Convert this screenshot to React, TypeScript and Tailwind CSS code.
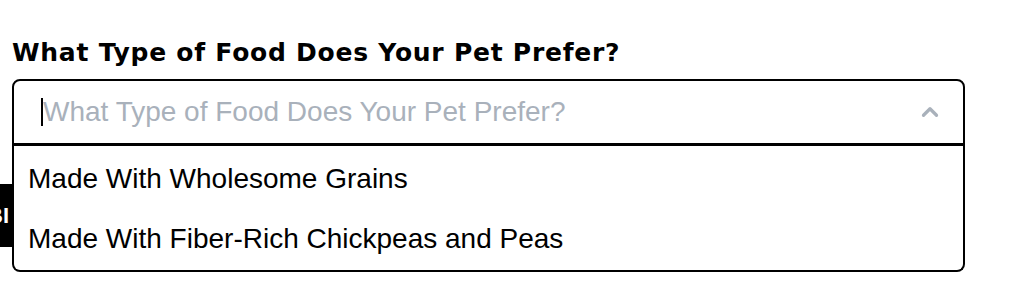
import { ChevronUp } from "lucide-react";

const options = [
  "Made With Wholesome Grains",
  "Made With Fiber-Rich Chickpeas and Peas",
];

const App = () => {
  return (
    <div className="relative w-[1024px] h-[307px] bg-white overflow-hidden">
      {/* partly hidden element behind the list */}
      <div className="absolute left-0 top-[184px] w-[12px] h-[63px] bg-black overflow-hidden flex items-center justify-end pr-[3px]">
        <span className="text-white text-[22px] font-bold whitespace-nowrap font-['Liberation_Sans',Arial,sans-serif] leading-none">
          BI
        </span>
      </div>

      <div className="pt-[38px] px-[12px]">
        <h2 className="text-[25px] font-bold text-black leading-[30px] mb-[11px] font-['DejaVu_Sans',sans-serif] tracking-[0.75px]">
          What Type of Food Does Your Pet Prefer?
        </h2>

        <div className="relative z-10 w-[953px]">
          {/* input */}
          <div className="flex items-center h-[67px] border-2 border-b-[3px] border-black rounded-t-[8px] bg-white pl-[27px] pr-[20px]">
            <div className="w-[2px] h-[28px] bg-black" />
            <span className="flex-1 text-[28px] text-[#a9b1bb] font-['Liberation_Sans',Arial,sans-serif]">
              What Type of Food Does Your Pet Prefer?
            </span>
            <ChevronUp className="w-[26px] h-[26px] text-[#a9b1bb]" strokeWidth={3} />
          </div>

          {/* option list */}
          <ul className="border-2 border-t-0 border-black rounded-b-[8px] bg-white pt-[3px] pb-[1px]">
            {options.map((o) => (
              <li
                key={o}
                className="h-[60px] flex items-center px-[14px] text-[28px] text-black font-['Liberation_Sans',Arial,sans-serif]"
              >
                {o}
              </li>
            ))}
          </ul>
        </div>
      </div>
    </div>
  );
};

export default App;
